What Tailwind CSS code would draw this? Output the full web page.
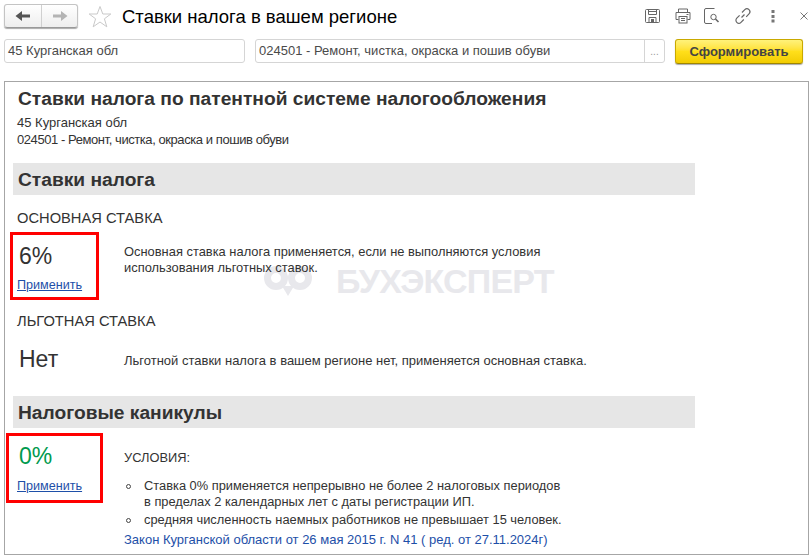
<!DOCTYPE html>
<html lang="ru">
<head>
<meta charset="utf-8">
<title>Ставки налога в вашем регионе</title>
<script src="https://cdn.jsdelivr.net/npm/@tailwindcss/browser@4"></script>
</head>
<body class="w-[811px] h-[560px] overflow-hidden bg-white font-['Liberation_Sans',Arial,sans-serif] text-[#333]">
  <!-- toolbar -->
  <header class="h-[36px] flex items-center pl-[4px] pr-[3px]">
    <div class="flex w-[74px] h-[24px] mt-[-4px] rounded-[3px] border border-[#c4c4c4] border-b-[#999] bg-gradient-to-b from-white to-[#eeeeee] shadow-[0_1px_1px_#aaa]">
      <button class="w-[37px] flex items-center justify-center border-r border-[#d0d0d0]">
        <svg width="16" height="12" viewBox="0 0 16 12"><path d="M0.5 6 L7 1 V4.5 H15 V7.5 H7 V11 Z" fill="#555"/></svg>
      </button>
      <button class="flex-1 flex items-center justify-center">
        <svg width="16" height="12" viewBox="0 0 16 12"><path d="M15.5 6 L9 1 V4.5 H1 V7.5 H9 V11 Z" fill="#b4b4b4"/></svg>
      </button>
    </div>
    <svg class="ml-[10px] mt-[-2px]" width="24" height="24" viewBox="0 0 24 24"><path d="M12 1.5 L14.8 9 H22.8 L16.4 13.8 L18.8 21.8 L12 17 L5.2 21.8 L7.6 13.8 L1.2 9 H9.2 Z" fill="#fff" stroke="#c9c9c9" stroke-width="1"/></svg>
    <h1 class="ml-[10px] text-[18.5px] text-black leading-none mt-[-2px]">Ставки налога в вашем регионе</h1>
    <div class="ml-auto flex items-center mt-[-4px] text-[#666]">
      <svg width="16" height="16" viewBox="0 0 16 16" fill="none" stroke="#666"><rect x="0.5" y="1.5" width="14" height="13" rx="1"/><path d="M3.5 1.5 V6.5 H11.5 V1.5 M4 3.5 H11 M4 9.5 V14.5 H11 V9.5 Z"/><rect x="6" y="11" width="3" height="3" fill="#666" stroke="none"/></svg>
      <svg class="ml-[14px]" width="16" height="16" viewBox="0 0 16 16" fill="none" stroke="#666"><path d="M3.5 4.5 V1 H12.5 V4.5 M3.5 11.5 H1 V4.5 H15 V11.5 H12.5"/><rect x="4" y="8.5" width="8" height="6.5"/><path d="M6 10.5 H10 M6 12.5 H10 M11.5 6.5 H13.5"/></svg>
      <svg class="ml-[13px]" width="16" height="16" viewBox="0 0 16 16" fill="none" stroke="#666"><path d="M10.5 0.5 H2 Q0.5 .5 0.5 2 V14 Q0.5 15.5 2 15.5 H8"/><circle cx="9.5" cy="9" r="2.7"/><path d="M11.5 11 L14.5 14" stroke-width="1.6"/></svg>
      <svg class="ml-[15px]" width="16" height="16" viewBox="0 0 16 16" fill="none" stroke="#666" stroke-width="1.2"><path d="M6.5 9.5 L9.5 6.5 M7 4.5 L9.8 1.7 a2.6 2.6 0 0 1 4.2 4.2 L11.2 8.8 M8.8 11.5 L6 14.3 a2.6 2.6 0 0 1 -4.2 -4.2 L4.6 7.3"/></svg>
      <svg class="ml-[20px]" width="4" height="14" viewBox="0 0 4 14" fill="#777"><rect x="0.5" y="1" width="3" height="3"/><rect x="0.5" y="6" width="3" height="3"/><rect x="0.5" y="10.5" width="3" height="3"/></svg>
      <svg class="ml-[25px]" width="8" height="8" viewBox="0 0 8 8" stroke="#777" stroke-width="1"><path d="M0.5 0.5 L7.5 7.5 M7.5 0.5 L0.5 7.5"/></svg>
    </div>
  </header>

  <!-- filter row -->
  <div class="h-[24px] mt-[3px] flex pl-[4px] text-[13px] text-[#4a4a4a]">
    <div class="w-[241px] flex items-center px-[3px] rounded-[3px] border border-[#d5d5d5]">45 Курганская обл</div>
    <div class="ml-[10px] w-[410px] flex rounded-[3px] border border-[#d5d5d5]">
      <div class="flex-1 flex items-center px-[3px]">024501 - Ремонт, чистка, окраска и пошив обуви</div>
      <div class="w-[20px] border-l border-[#d5d5d5] flex items-center justify-center text-[10px] text-[#999]">...</div>
    </div>
    <button class="ml-[10px] w-[128px] h-[25px] rounded-[3px] border border-[#c9a900] border-b-[#a08600] bg-gradient-to-b from-[#fff27a] via-[#ffdf1a] to-[#f2cc00] shadow-[0_1px_1px_#aaa] text-[13px] font-bold text-[#444]">Сформировать</button>
  </div>

  <!-- report -->
  <main class="relative mt-[18px] ml-[4px] mr-[2px] h-[474px] border border-[#a6a6a6] pl-[8px]">
    <h2 class="ml-[5px] pt-[6px] text-[19.2px] leading-[22px] font-bold">Ставки налога по патентной системе налогообложения</h2>
    <div class="mt-[4px] text-[13px] leading-[17px]">
      <p class="ml-[4px]">45 Курганская обл</p>
      <p class="ml-[4px] tracking-[-0.43px]">024501 - Ремонт, чистка, окраска и пошив обуви</p>
    </div>

    <h3 class="mt-[15px] w-[682px] h-[32px] flex items-center px-[5px] pt-[2px] bg-[#e6e6e6] text-[19.2px] font-bold">Ставки налога</h3>
    <p class="mt-[13px] ml-[4px] text-[14.7px] leading-[20px]">ОСНОВНАЯ СТАВКА</p>
    <div class="flex mt-[9px] h-[58px]">
      <div class="w-[111px] pl-[4px]">
        <div class="ml-[2px] mt-[5px] text-[23px] leading-[28px]">6%</div>
        <a href="#" class="block mt-[7px] text-[12.6px] leading-[16px] text-[#1e4fa8] underline">Применить</a>
      </div>
      <p class="mt-[7px] w-[460px] text-[12.9px] leading-[16px]">Основная ставка налога применяется, если не выполняются условия использования льготных ставок.</p>
    </div>
    <p class="mt-[16px] ml-[4px] text-[14.7px] leading-[20px]">ЛЬГОТНАЯ СТАВКА</p>
    <div class="flex mt-[14px] h-[34px]">
      <div class="w-[111px] pl-[6px] text-[23px] leading-[28px]">Нет</div>
      <p class="mt-[8px] text-[13px] leading-[16px]">Льготной ставки налога в вашем регионе нет, применяется основная ставка.</p>
    </div>

    <h3 class="mt-[17px] w-[682px] h-[32px] flex items-center px-[5px] pt-[2px] bg-[#e6e6e6] text-[19.2px] font-bold">Налоговые каникулы</h3>
    <div class="flex mt-[11px]">
      <div class="w-[111px] pl-[4px]">
        <div class="ml-[2px] mt-[3px] text-[23px] leading-[28px] text-[#009a4e]">0%</div>
        <a href="#" class="block mt-[8px] text-[12.6px] leading-[16px] text-[#1e4fa8] underline">Применить</a>
      </div>
      <div class="text-[12.85px] leading-[16px]">
        <p class="mt-[11px]">УСЛОВИЯ:</p>
        <ul class="mt-[12px]">
          <li class="flex"><span class="w-[20px] shrink-0 pl-[2px] pt-[6px]"><span class="block w-[5px] h-[5px] rounded-full border border-[#444]"></span></span><span class="w-[450px]">Ставка 0% применяется непрерывно не более 2 налоговых периодов<br>в пределах 2 календарных лет с даты регистрации ИП.</span></li>
          <li class="flex mt-[2px]"><span class="w-[20px] shrink-0 pl-[2px] pt-[6px]"><span class="block w-[5px] h-[5px] rounded-full border border-[#444]"></span></span><span>средняя численность наемных работников не превышает 15 человек.</span></li>
        </ul>
        <a href="#" class="block mt-[4px] text-[13px] text-[#1e4fa8]">Закон Курганской области от 26 мая 2015 г. N 41 ( ред. от 27.11.2024г)</a>
      </div>
    </div>

    <!-- watermark -->
    <div class="absolute left-[258px] top-[182px] flex items-center pointer-events-none -z-10">
      <svg width="50" height="30" viewBox="0 0 50 30" fill="none" stroke="#e8e8ec" stroke-width="7"><circle cx="13" cy="12" r="8.5"/><circle cx="37" cy="12" r="8.5"/><path d="M25 30 L19 20 H31 Z" fill="#e8e8ec" stroke="none"/></svg>
      <span class="ml-[23px] text-[34px] leading-none font-bold tracking-[-0.8px] text-[#e8e8ec]">БУХЭКСПЕРТ</span>
    </div>

    <!-- red highlight frames -->
    <div class="absolute left-[5px] top-[150px] w-[89px] h-[68px] border-[3px] border-[#ff0000]"></div>
    <div class="absolute left-[1px] top-[351px] w-[97px] h-[70px] border-[3px] border-[#ff0000]"></div>
  </main>
</body>
</html>
